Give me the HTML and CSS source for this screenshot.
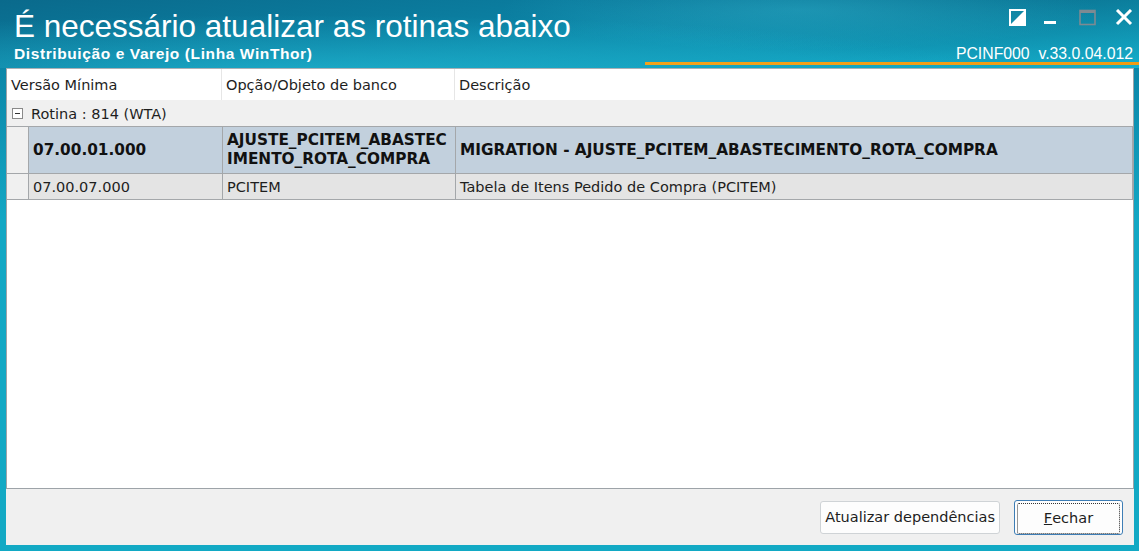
FILE: index.html
```html
<!DOCTYPE html>
<html lang="pt-BR">
<head>
<meta charset="UTF-8">
<title>É necessário atualizar as rotinas abaixo</title>
<link rel="stylesheet" href="styles.css">
</head>
<body>
<div class="window">
  <div class="titlebar">
    <div class="title-left">
      <div class="title">É necessário atualizar as rotinas abaixo</div>
      <div class="subtitle">Distribuição e Varejo (Linha WinThor)</div>
    </div>
    <div class="title-right">
      <div class="controls">
        <svg class="ctl" width="17" height="17" viewBox="0 0 17 17">
          <rect x="1" y="1" width="15" height="15" fill="none" stroke="#fff" stroke-width="2"/>
          <polygon points="2,15 15,2 15,15" fill="#fff"/>
        </svg>
        <svg class="ctl" width="13" height="17" viewBox="0 0 13 17">
          <rect x="0" y="12" width="12" height="3" fill="#fff"/>
        </svg>
        <svg class="ctl" width="17" height="17" viewBox="0 0 17 17">
          <rect x="1" y="1.5" width="15" height="14" fill="none" stroke="#7d8a92" stroke-width="1.6"/>
          <rect x="1" y="1" width="15" height="3" fill="#7d8a92"/>
        </svg>
        <svg class="ctl" width="18" height="17" viewBox="0 0 18 17">
          <path d="M2 1 L16 15 M16 1 L2 15" stroke="#fff" stroke-width="3"/>
        </svg>
      </div>
      <div class="version">PCINF000&nbsp;&nbsp;v.33.0.04.012</div>
    </div>
  </div>

  <div class="content">
    <div class="grid">
      <div class="row head">
        <div class="cell c1">Versão Mínima</div>
        <div class="cell c2">Opção/Objeto de banco</div>
        <div class="cell c3">Descrição</div>
      </div>
      <div class="group">
        <span class="toggle"></span>
        <span>Rotina : 814 (WTA)</span>
      </div>
      <div class="row item selected">
        <div class="indent"></div>
        <div class="cell c1x">07.00.01.000</div>
        <div class="cell c2">AJUSTE_PCITEM_ABASTEC<br>IMENTO_ROTA_COMPRA</div>
        <div class="cell c3">MIGRATION - AJUSTE_PCITEM_ABASTECIMENTO_ROTA_COMPRA</div>
      </div>
      <div class="row item">
        <div class="indent"></div>
        <div class="cell c1x">07.00.07.000</div>
        <div class="cell c2">PCITEM</div>
        <div class="cell c3">Tabela de Itens Pedido de Compra (PCITEM)</div>
      </div>
    </div>

    <div class="footer">
      <button class="btn">Atualizar dependências</button>
      <button class="btn primary"><span class="focus"><u>F</u>echar</span></button>
    </div>
  </div>
</div>
</body>
</html>
```

FILE: styles.css
```css
body {
  margin: 0;
  font-family: "Liberation Sans", Arial, sans-serif;
}
.window {
  width: 1139px;
  height: 551px;
  display: flex;
  flex-direction: column;
  background: linear-gradient(to bottom, #0a7092 0%, #0c86a8 12%, #12a7c4 40%, #12a9c4 100%);
}
.titlebar {
  position: relative;
  height: 68px;
  display: flex;
  justify-content: space-between;
  color: #fff;
  background:
    radial-gradient(ellipse 700px 60px at 300px 75px, rgba(40, 200, 225, 0.55), rgba(40, 200, 225, 0) 100%),
    radial-gradient(ellipse 300px 40px at 800px 10px, rgba(60, 190, 215, 0.35), rgba(60, 190, 215, 0) 100%),
    radial-gradient(ellipse 500px 90px at 1050px -20px, rgba(0, 50, 80, 0.35), rgba(0, 50, 80, 0) 100%),
    linear-gradient(172deg, #0a6a8c 0%, #0b7fa1 40%, #15b1cd 100%);
}
.titlebar::after {
  content: "";
  position: absolute;
  left: 645px;
  right: 0;
  bottom: 3px;
  height: 3px;
  background: linear-gradient(to right, #f3a21c, #f29b13);
}
.title-left {
  padding: 8px 0 0 14px;
}
.title {
  font-size: 31.5px;
  line-height: 36px;
}
.subtitle {
  font-size: 15.5px;
  font-weight: bold;
  letter-spacing: 0.6px;
  margin-top: 1px;
}
.title-right {
  display: flex;
  flex-direction: column;
  align-items: flex-end;
  padding: 9px 6px 0 0;
}
.controls {
  display: flex;
  align-items: flex-start;
}
.ctl {
  display: block;
}
.controls .ctl:nth-child(1) { margin-right: 18px; }
.controls .ctl:nth-child(2) { margin-right: 22px; }
.controls .ctl:nth-child(3) { margin-right: 19px; }
.version {
  font-size: 15.8px;
  margin-top: 19px;
}

.content {
  flex: 1;
  margin: 0 5px 6px 6px;
  background: #f0f0f0;
  display: flex;
  flex-direction: column;
}
.grid {
  height: 419px;
  border: 1px solid #9da3a8;
  border-top-color: #aab0b5;
  background: #fff;
  font-family: "DejaVu Sans", Verdana, sans-serif;
  font-size: 14.5px;
  color: #1e1e1e;
}
.row {
  display: flex;
}
.cell {
  box-sizing: border-box;
  padding: 0 4px;
  display: flex;
  align-items: center;
  white-space: nowrap;
  overflow: hidden;
}
.head {
  height: 31px;
  border-bottom: 1px solid #f0f0f0;
}
.head .cell {
  border-right: 1px solid #e6e6e6;
}
.c1 { width: 215px; }
.c1x { width: 194px; }
.c2 { width: 233px; }
.c3 { flex: 1; border-right: none !important; }
.group {
  height: 25px;
  display: flex;
  align-items: center;
  background: #f0f0f0;
  padding-left: 5px;
  gap: 8px;
}
.toggle {
  position: relative;
  width: 9px;
  height: 9px;
  border: 1px solid #8a8a8a;
  background: #fff;
}
.toggle::after {
  content: "";
  position: absolute;
  left: 2px;
  top: 4px;
  width: 5px;
  height: 1px;
  background: #333;
}
.item {
  border-top: 1px solid #a4a7aa;
  height: 25px;
}
.item:last-child {
  border-bottom: 1px solid #a4a7aa;
}
.item .indent {
  width: 21px;
  background: #f0f0f0;
  border-right: 1px solid #a4a7aa;
}
.item .cell {
  border-right: 1px solid #a4a7aa;
  background: #e4e4e4;
}
.item .c3 {
  border-right: 1px solid #a4a7aa !important;
}
.selected {
  height: 46px;
  font-weight: bold;
  font-size: 15.3px;
  color: #111;
}
.selected .cell {
  background: #c2d0dd;
  line-height: 19px;
}
.selected .c3 {
  padding-top: 1px;
}

.footer {
  flex: 1;
  display: flex;
  justify-content: flex-end;
  align-items: center;
  gap: 14px;
  padding-right: 11px;
}
.btn {
  font-family: "DejaVu Sans", Verdana, sans-serif;
  font-size: 14.5px;
  color: #1e1e1e;
  height: 33px;
  padding: 0 4px;
  background: #fdfdfd;
  border: 1px solid #cfd3d6;
  border-radius: 3px;
}
.btn.primary {
  width: 109px;
  height: 35px;
  padding: 2px;
  border: 1px solid #3d7db5;
}
.focus {
  display: flex;
  align-items: center;
  justify-content: center;
  height: 100%;
  border: 1px dotted #333;
  border-radius: 2px;
}
```
